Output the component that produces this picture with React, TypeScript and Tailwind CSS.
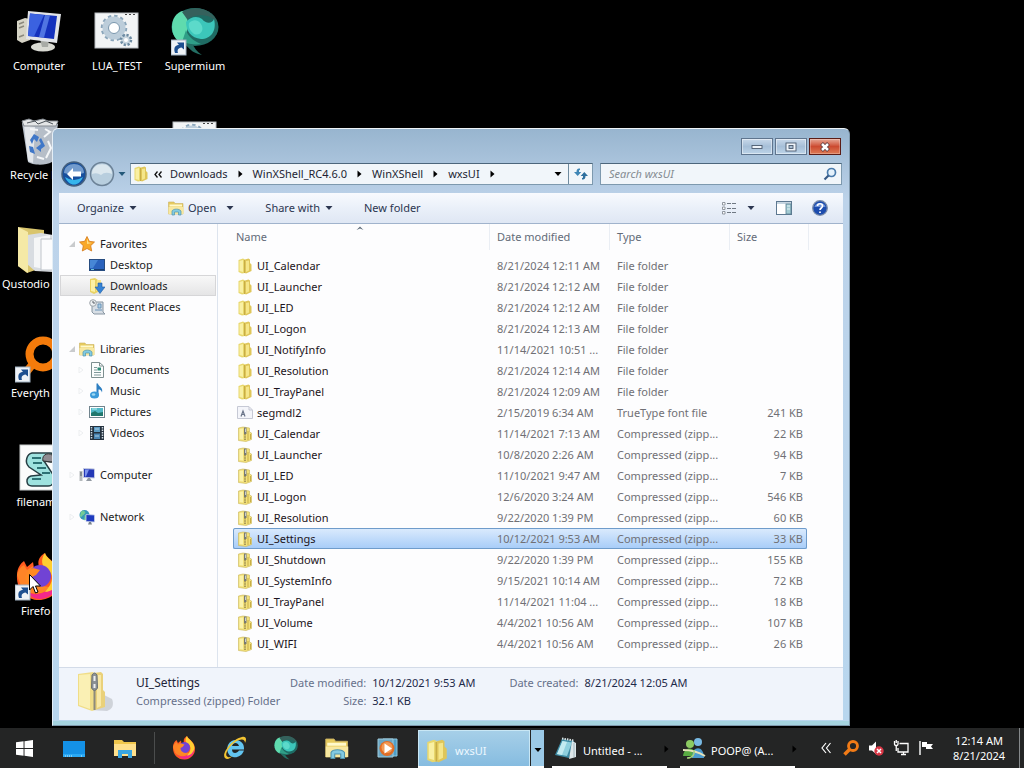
import React, { useState } from 'react';

type IconProps = { className?: string };

const ShortcutBadge = () => (
  <g>
    <rect x="0" y="32" width="15" height="15" fill="#eef2f6" stroke="#9fb0c0" />
    <path d="M4 45 C2 39 5 37 8 37 L6 34.500 H13 V41.500 L10.500 39.500 C7 40 6 42 7 45 Z" fill="#1d4f8f" />
  </g>
);

const ComputerBig = () => (
  <svg viewBox="0 0 48 48" className="size-12">
    <path d="M2 13 L10 10 L15 11 V32 L7 35 L2 32 Z" fill="#d6d4c6" />
    <path d="M4 16 L9 14 M4 20 L9 18 M4 29 L9 27" stroke="#8a887c" strokeWidth="1.500" />
    <ellipse cx="28" cy="39" rx="12" ry="4.500" fill="#d9dad3" />
    <path d="M25 31 H34 L33 39 H27 Z" fill="#a8aba6" />
    <path d="M13 3 L46 6 L42 35 L11 31 Z" fill="#e2e4e8" />
    <path d="M15 5.500 L42 8 L39 31 L13 28 Z" fill="#1431bd" />
    <path d="M15 5.500 L29 7 L19 28.500 L13 28 Z" fill="#3b62e0" />
    <path d="M30 7 L35 7.500 L29 29.500 L24 29 Z" fill="#6a93f2" opacity=".7" />
  </svg>
);

const GearFile = () => (
  <svg viewBox="0 0 48 48" className="size-12">
    <rect x="2" y="5" width="43" height="35" fill="#f2f4f5" stroke="#b8bcc0" />
    <path d="M32 6.500 H43" stroke="#444" strokeDasharray="2 2" />
    <circle cx="21" cy="20" r="11.500" fill="none" stroke="#8aa5ba" strokeWidth="3.500" strokeDasharray="3.200 2.800" />
    <circle cx="21" cy="20" r="8.500" fill="none" stroke="#bccdda" strokeWidth="6" />
    <circle cx="21" cy="20" r="5.500" fill="#fff" stroke="#7996ad" />
    <circle cx="33" cy="32" r="5" fill="#c9d6df" stroke="#6d8ba2" strokeWidth="2.500" strokeDasharray="2.200 1.700" />
    <circle cx="33" cy="32" r="2" fill="#fff" />
  </svg>
);

const SupermiumArt = () => (
  <g>
    <ellipse cx="24" cy="19" rx="23.500" ry="19" fill="#1f6b63" />
    <path d="M1 19 C1 10 6 4 12 3 C19 10 18 24 11 35 C4 32 1 26 1 19" fill="#5fdbae" />
    <path d="M11 4 C24 -4 42 1 46 14 C38 5 24 6 16 11 Z" fill="#35615c" />
    <path d="M15 14 C20 8 27 8 31 11 C35 16 41 16 43 11 C46 23 40 31 30 31 C20 30 15 23 15 14" fill="#3cc6ba" />
    <path d="M18 15 C23 10 29 12 31 18 C33 24 28 28 23 26 C19 23 17 19 18 15" fill="#69e2d2" opacity=".7" />
    <path d="M11 34 C18 36 24 37 30 36 C21 32 17 28 15 22 Z" fill="#2f9e87" />
    <path d="M12 35 C18 39 20 45 31 47 C25 43 24 40 22 37 Z" fill="#236e63" />
  </g>
);

const SupermiumBig = () => (
  <svg viewBox="0 0 48 48" className="size-12">
    <SupermiumArt />
    <ShortcutBadge />
  </svg>
);

const RecycleBin = () => (
  <svg viewBox="0 0 48 48" className="size-12">
    <path d="M7 6 L43 7 L37 45 C30 49 17 48 13 45 Z" fill="#b6bec8" />
    <path d="M9 8 L20 10 L18 46 L13 44 Z" fill="#e3e7eb" />
    <path d="M7 4 L14 2 L19 4 L28 2 L33 4 L43 4 L41 9 L9 9 Z" fill="#e4e6e7" stroke="#858b91" />
    <path d="M12 6 L20 4 L23 7 L31 4 L38 7" stroke="#4d545a" fill="none" />
    <path d="M15 23 L19 17 L24 20 L22 25 L19 22 L17 27 Z M26 21 L30 29 L26 32 L26 35 L21 31 L26 27 L24 23 Z M14 29 L18 30 L20 37 L15 35 Z" fill="#3f77c8" />
    <path d="M30 12 L35 15 L29 20 M33 24 L36 31 L31 41 M15 12 L23 13 M22 40 L29 42" stroke="#f4f6f8" strokeWidth="2" fill="none" />
  </svg>
);

const QustodioFolder = () => (
  <svg viewBox="0 0 48 48" className="size-12">
    <path d="M3 1 L29 4 V41 L12 47 L3 40 Z" fill="#d9c56d" />
    <path d="M12 9 L26 7 L38 9 V46 L20 45 L12 38 Z" fill="#d8dce1" />
    <path d="M19 12 L35 9 V44 L19 41 Z" fill="#f5f6f7" />
    <path d="M26 13 H46 V44 H26 Z" fill="#fcfcfd" stroke="#bfc4ca" />
    <path d="M3 1 L13 6 V47 L3 40 Z" fill="#f5e9a6" />
  </svg>
);

const EverythingBig = () => (
  <svg viewBox="0 0 48 48" className="size-12">
    <circle cx="28" cy="19" r="13.500" fill="none" stroke="#f47b0b" strokeWidth="8" />
    <path d="M17 30 L9 40" stroke="#f47b0b" strokeWidth="8" strokeLinecap="round" />
    <ShortcutBadge />
  </svg>
);

const ScriptFile = () => (
  <svg viewBox="0 0 48 48" className="size-12">
    <rect x="5" y="1" width="42" height="45" fill="#fbfcfc" stroke="#c7cbcc" />
    <path d="M17 9 H35 C41 9 41 18 36 18 L29 17 L39 32 C41 37 38 42 33 42 H17 C11 42 10 34 16 32 L26 31 L14 23 C9 18 12 10 17 9 Z" fill="#9ee2df" stroke="#263e44" strokeWidth="1.500" />
    <path d="M17 14 H26 M18 19 H27 M22 24 H31 M27 29 H35 M17 35 H26" stroke="#2d7275" strokeWidth="2" />
    <path d="M28 17 C26 10 35 7 39 13 L37 18 Z" fill="#8f8b91" stroke="#333" />
  </svg>
);

const FirefoxArt = () => (
  <g>
    <path d="M2 22 C2 15 6 10 9 8 L12 14 L18 9 L19 15 L25 16 C21 8 25 3 30 0 C31 5 40 8 44 17 C50 31 42 45 26 47 C11 48 1 36 2 22" fill="#ff5a1f" />
    <path d="M2 22 C3 18 5 14 9 12 L12 17 L18 13 C18 25 23 34 35 34 C29 43 13 43 6 33 Z" fill="#ff8427" />
    <path d="M9 36 C16 44 30 43 38 31 C41 24 39 17 34 14 C42 16 47 25 43 34 C38 44 26 49 17 44 Z" fill="#f5288b" />
    <path d="M30 0 C31 6 44 10 45 24 C43 34 36 39 30 39 C39 29 39 21 32 16 C27 14 25 7 30 0" fill="#ffcf32" />
    <circle cx="25" cy="23" r="11" fill="#7143d4" />
    <path d="M13 18 L18 15 L25 17 L21 22 L17 24 C17 32 25 35 32 34 C22 42 11 34 10 24 Z" fill="#ff8a23" />
  </g>
);

const FirefoxBig = () => (
  <svg viewBox="0 0 48 48" className="size-12">
    <FirefoxArt />
    <ShortcutBadge />
  </svg>
);

const Blank = () => <span className="block size-12" />;

const desktopItems: { label: string; Icon: () => React.ReactElement; labelClass?: string }[] = [
  { label: 'Computer', Icon: ComputerBig },
  { label: 'Recycle Bin', Icon: RecycleBin },
  { label: 'Qustodio', Icon: QustodioFolder, labelClass: 'self-start pl-[2px]' },
  { label: 'Everyth', Icon: EverythingBig, labelClass: 'self-start pl-[11px]' },
  { label: 'filename', Icon: ScriptFile },
  { label: 'Firefo', Icon: FirefoxBig, labelClass: 'self-start pl-[21px]' },
  { label: 'LUA_TEST', Icon: GearFile },
  { label: '', Icon: Blank },
  { label: '', Icon: Blank },
  { label: '', Icon: Blank },
  { label: '', Icon: Blank },
  { label: '', Icon: Blank },
  { label: 'Supermium', Icon: SupermiumBig },
  { label: '', Icon: GearFile },
];

const Folder = ({ className = 'size-4' }: IconProps) => (
  <svg viewBox="0 0 16 16" className={className}>
    <path d="M1.500 2 L6 .5 L8 1.500 V15 L5 15.500 L1.500 14 Z" fill="#e8d76c" />
    <path d="M2.500 3 L6 2 V14 L2.500 13 Z" fill="#f9f0a3" />
    <path d="M8 1.500 L11.500 .5 L13 1.500 V5 L14.500 6.500 V13 L9 15.500 L8 15 Z" fill="#dfc659" />
    <path d="M9 3 L12 2.500 V12.500 L9 14 Z" fill="#f5e68a" />
    <path d="M7.500 2 V15" stroke="#c7ad45" />
  </svg>
);

const ZipFolder = ({ className = 'size-4' }: IconProps) => (
  <svg viewBox="0 0 16 16" className={className}>
    <path d="M1.500 2 L6 1 L12.500 2 V6 L14.500 7 V13.500 L9 15.500 L1.500 14.500 Z" fill="#f3e17a" stroke="#c9b558" strokeWidth=".6" />
    <path d="M2.500 3 L6 2.500 V13.500 L2.500 13 Z" fill="#fbf3ab" />
    <path d="M8 8 V15" stroke="#8c7f49" strokeWidth="1.400" strokeDasharray="1.500 .8" />
    <path d="M7 1.500 H9.500 V8 H7 Z" fill="#777a74" />
    <path d="M8.500 2.500 V6" stroke="#e1e3e0" strokeWidth=".8" />
    <path d="M11 5 V14 M13.500 8 V13" stroke="#c9ae45" />
  </svg>
);

const ZipBig = () => (
  <svg viewBox="0 0 40 42" className="h-[42px] w-10">
    <path d="M14 39 L31 40 C37 38 38 33 36 28 L28 24 Z" fill="#b9bcc3" opacity=".6" />
    <path d="M2 3 L17 1 L19 3 V39 L16 40 L2 35 Z" fill="#f0dd88" />
    <path d="M3 4 L14 3 V38 L3 34 Z" fill="#faf0b4" />
    <path d="M18 2 L25 1 L27 3 V19 L29 21 V36 L19 39 Z" fill="#ead17a" />
    <path d="M21 4 L25 4 V35 L21 37 Z" fill="#f8e8a6" />
    <path d="M18.500 18 V39" stroke="#8d8a7c" strokeWidth="2" />
    <path d="M16 4 Q18.500 0 21 4 L21.500 17 Q18.500 22 15.500 17 Z" fill="#8c9194" stroke="#6a7074" />
    <path d="M18.500 5 V10 M18.500 13 V17" stroke="#eceeef" strokeWidth="2" />
  </svg>
);

const FontFile = () => (
  <svg viewBox="0 0 16 16" className="size-4">
    <path d="M.5 1.500 H12 L15.500 5 V13.500 H.5 Z" fill="#f4f5fa" stroke="#c6c9d5" />
    <path d="M4 11.500 L6 6 L8 11.500 M5 9.500 H7.500" stroke="#6a7489" strokeWidth="1.200" fill="none" />
    <path d="M12 2 V5 H15" stroke="#c4c7d3" fill="none" />
  </svg>
);

const Star = () => (
  <svg viewBox="0 0 16 16" className="size-4">
    <path d="M8 .5 L10.300 5.300 L15.500 6 L11.700 9.700 L12.700 15 L8 12.500 L3.300 15 L4.300 9.700 L.5 6 L5.700 5.300 Z" fill="#f9a92a" stroke="#d3791b" strokeWidth=".8" />
    <path d="M8 2.500 L9.500 6.500 L13 7 L8 8 Z" fill="#ffe08a" />
  </svg>
);

const Monitor = () => (
  <svg viewBox="0 0 16 16" className="size-4">
    <rect x=".5" y="2.500" width="15" height="11" fill="#2a62bd" stroke="#274c80" />
    <path d="M1 3 H9 L4 11 H1 Z" fill="#4787d6" />
    <path d="M1 12.500 H15" stroke="#173f75" />
    <path d="M2 12.500 H5" stroke="#6fc6dc" />
  </svg>
);

const DownloadsIcon = () => (
  <svg viewBox="0 0 16 16" className="size-4">
    <path d="M1 1 L6 0 L9 2 V14 L5 16 L1 14 Z" fill="#e9d264" />
    <path d="M2 2 L6 2 V14 L2 13 Z" fill="#fbf1a4" />
    <path d="M8 2 L12 2 V13 H7 Z" fill="#f6e58b" />
    <path d="M9 5 H13 V9 H16 L11 15.500 L6 9 H9 Z" fill="#3683d5" stroke="#1f5da3" strokeWidth=".6" />
  </svg>
);

const RecentIcon = () => (
  <svg viewBox="0 0 16 16" className="size-4">
    <path d="M3 3 H14 V13 L16 15 H5 L3 13 Z" fill="#d7dee5" stroke="#8795a1" />
    <circle cx="4" cy="4" r="3.300" fill="#eef1f3" stroke="#9ea5aa" />
    <path d="M4 2 V4 H6" stroke="#586069" fill="none" />
    <path d="M9 5 H12 V9 H9 Z M6 11 H13" stroke="#6a93b7" fill="#a9cee6" />
  </svg>
);

const Libraries = ({ className = 'size-4' }: IconProps) => (
  <svg viewBox="0 0 16 16" className={className}>
    <path d="M.5 2 H6 L7 3.500 H15 V14 H.5 Z" fill="#e7cb5e" stroke="#c9b163" strokeWidth=".6" />
    <path d="M1.500 4.500 H14 V6.500 H1.500 Z" fill="#fff9cb" />
    <path d="M.5 7 H15.500 V14 H.5 Z" fill="#f8e8a0" />
    <path d="M4 15 V11 C5 8.500 11.500 8.500 13 11 V15 H10.500 V12 H6.500 V15 Z" fill="#83cbe2" stroke="#4f94ae" strokeWidth=".7" />
  </svg>
);

const DocIcon = () => (
  <svg viewBox="0 0 16 16" className="size-4">
    <path d="M2.500 .5 H10.500 L14.500 4 V15.500 H2.500 Z" fill="#fcfdfd" stroke="#7d8f90" />
    <path d="M10.500 .5 V4 H14" fill="none" stroke="#7d8f90" />
    <path d="M5 5.500 H8 M5 8 H8 M5 10.500 H12 M5 13 H12" stroke="#7f989a" />
    <path d="M8.500 5.500 H12 V8.500 H8.500 Z" fill="#2d8c77" />
  </svg>
);

const MusicIcon = () => (
  <svg viewBox="0 0 16 16" className="size-4">
    <path d="M7.500 .5 H9 C9.500 4 14.500 4 13 9.500 C12.500 7 10.500 6.500 9.500 6.500 V13 H7.500 Z" fill="#2d7fc2" />
    <ellipse cx="5.500" cy="12" rx="4.500" ry="3.500" fill="#3b9ad9" />
    <ellipse cx="4.500" cy="11.500" rx="1.800" ry="1.200" fill="#9fd9f3" />
  </svg>
);

const PictureIcon = () => (
  <svg viewBox="0 0 16 16" className="size-4">
    <rect x=".5" y="2.500" width="15" height="11" fill="#fff" stroke="#71848e" />
    <rect x="2" y="4" width="12" height="8" fill="#51b8c7" />
    <path d="M2 9 L6 7 L9 9 L14 8 V12 H2 Z" fill="#20776d" />
    <path d="M3 5 H8" stroke="#b9eff2" />
  </svg>
);

const VideoIcon = () => (
  <svg viewBox="0 0 16 16" className="size-4">
    <rect x="1" y="1" width="14" height="14" fill="#24313e" />
    <path d="M2.500 2 V14 M13.500 2 V14" stroke="#cfdbe3" strokeWidth="1.500" strokeDasharray="1.500 1" />
    <path d="M5 2 H11 V7 H5 Z" fill="#5c9bc4" />
    <path d="M5 8.500 H11 V14 H5 Z" fill="#4b86b4" />
    <path d="M6 4 H10 M6 11 H10" stroke="#aacce0" />
  </svg>
);

const ComputerSmall = () => (
  <svg viewBox="0 0 16 16" className="size-4">
    <path d="M.5 4 H3.500 V14 H.5 Z" fill="#b4b9bc" />
    <path d="M1 6 H3 M1 8 H3" stroke="#596267" />
    <path d="M4.500 1.500 L15.500 2 V11 L4.500 10.500 Z" fill="#2438b5" stroke="#c5cbe2" />
    <path d="M6 2.500 L10 2.500 L7 9.500 H6 Z" fill="#7c93ed" />
    <path d="M9 11 H11 L13 14 H7 Z" fill="#9299a2" />
  </svg>
);

const NetworkIcon = () => (
  <svg viewBox="0 0 16 16" className="size-4">
    <circle cx="5.500" cy="6" r="5" fill="#3698b9" />
    <path d="M2 3 C5 1 7 3 5 5 C2 6 4 8 1 7 M6 6 L8 9 L5 11" fill="#73ce94" stroke="#77cc99" />
    <path d="M7 5.500 L15.500 6 V13 L7 12.500 Z" fill="#1e3abf" stroke="#c6d0e8" strokeWidth=".8" />
    <path d="M10 13 H12 L13 15.500 H9 Z" fill="#7a838c" />
  </svg>
);

type NavItem = { label: string; Icon: (p: IconProps) => React.ReactElement };
const navGroups: { head: NavItem; open?: boolean; arrows?: boolean; items: NavItem[] }[] = [
  {
    head: { label: 'Favorites', Icon: Star },
    open: true,
    items: [
      { label: 'Desktop', Icon: Monitor },
      { label: 'Downloads', Icon: DownloadsIcon },
      { label: 'Recent Places', Icon: RecentIcon },
    ],
  },
  {
    head: { label: 'Libraries', Icon: Libraries },
    open: true,
    arrows: true,
    items: [
      { label: 'Documents', Icon: DocIcon },
      { label: 'Music', Icon: MusicIcon },
      { label: 'Pictures', Icon: PictureIcon },
      { label: 'Videos', Icon: VideoIcon },
    ],
  },
  { head: { label: 'Computer', Icon: ComputerSmall }, items: [] },
  { head: { label: 'Network', Icon: NetworkIcon }, items: [] },
];

const zip = 'Compressed (zipp...';
const files: [string, string, string, string][] = [
  ['UI_Calendar', '8/21/2024 12:11 AM', 'File folder', ''],
  ['UI_Launcher', '8/21/2024 12:12 AM', 'File folder', ''],
  ['UI_LED', '8/21/2024 12:12 AM', 'File folder', ''],
  ['UI_Logon', '8/21/2024 12:13 AM', 'File folder', ''],
  ['UI_NotifyInfo', '11/14/2021 10:51 ...', 'File folder', ''],
  ['UI_Resolution', '8/21/2024 12:14 AM', 'File folder', ''],
  ['UI_TrayPanel', '8/21/2024 12:09 AM', 'File folder', ''],
  ['segmdl2', '2/15/2019 6:34 AM', 'TrueType font file', '241 KB'],
  ['UI_Calendar', '11/14/2021 7:13 AM', zip, '22 KB'],
  ['UI_Launcher', '10/8/2020 2:26 AM', zip, '94 KB'],
  ['UI_LED', '11/10/2021 9:47 AM', zip, '7 KB'],
  ['UI_Logon', '12/6/2020 3:24 AM', zip, '546 KB'],
  ['UI_Resolution', '9/22/2020 1:39 PM', zip, '60 KB'],
  ['UI_Settings', '10/12/2021 9:53 AM', zip, '33 KB'],
  ['UI_Shutdown', '9/22/2020 1:39 PM', zip, '155 KB'],
  ['UI_SystemInfo', '9/15/2021 10:14 AM', zip, '72 KB'],
  ['UI_TrayPanel', '11/14/2021 11:04 ...', zip, '18 KB'],
  ['UI_Volume', '4/4/2021 10:56 AM', zip, '107 KB'],
  ['UI_WIFI', '4/4/2021 10:56 AM', zip, '26 KB'],
];

const Down = ({ className = '' }: IconProps) => (
  <svg viewBox="0 0 8 5" className={`h-[5px] w-2 shrink-0 ${className}`}>
    <path d="M.5 0 H7.500 L4 4 Z" fill="currentColor" />
  </svg>
);

const Right = ({ className = '' }: IconProps) => (
  <svg viewBox="0 0 5 8" className={`h-2 w-[5px] shrink-0 ${className}`}>
    <path d="M.5 .5 V7.500 L4.500 4 Z" fill="currentColor" />
  </svg>
);

const TreeArrow = ({ open }: { open?: boolean }) => (
  <svg viewBox="0 0 6 6" className="size-[6px] shrink-0">
    {open ? <path d="M6 0 V6 H0 Z" fill="#c9cbcd" /> : <path d="M1 0 L5 3 L1 6 Z" fill="none" stroke="#eceef0" />}
  </svg>
);

function TitleBar() {
  const glass = 'flex h-[17px] w-8 items-center justify-center border border-[#5f758e] bg-linear-to-b from-[#c8d9ea] via-[#a6bfd8] via-50% to-[#bdd4e8] shadow-[inset_0_0_0_1px_rgba(255,255,255,0.45)]';
  return (
    <div className="flex h-[27px] items-end justify-end gap-[2px] pr-[2px] pb-px">
      <button aria-label="Minimize" className={glass}>
        <svg viewBox="0 0 12 6" className="h-[6px] w-3"><rect x="1" y="1.500" width="10" height="3" fill="#eef4fa" stroke="#4a5a6e" strokeWidth=".9" /></svg>
      </button>
      <button aria-label="Maximize" className={glass}>
        <svg viewBox="0 0 12 10" className="h-[10px] w-3"><rect x="1" y="1" width="10" height="8" fill="#eef4fa" stroke="#4a5a6e" strokeWidth=".9" /><rect x="4" y="3.500" width="4" height="3" fill="#a9bfd4" stroke="#4a5a6e" strokeWidth=".9" /></svg>
      </button>
      <button aria-label="Close" className="flex h-[17px] w-8 items-center justify-center border border-[#5a1c16] bg-linear-to-b from-[#e5a796] via-[#cc4a30] via-50% to-[#dc7a55] shadow-[inset_0_0_0_1px_rgba(255,255,255,0.25)]">
        <svg viewBox="0 0 12 10" className="h-[10px] w-3"><path d="M2.500 1.500 L9.500 8.500 M9.500 1.500 L2.500 8.500" stroke="#5a3a40" strokeWidth="4" /><path d="M3 2 L9 8 M9 2 L3 8" stroke="#fff" strokeWidth="2.500" /></svg>
      </button>
    </div>
  );
}

function NavigationBar() {
  const crumbs = ['Downloads', 'WinXShell_RC4.6.0', 'WinXShell', 'wxsUI'];
  return (
    <div className="flex h-[37px] items-center pr-px pb-px pl-[2px]">
      <button aria-label="Back">
        <svg viewBox="0 0 26 26" className="size-[26px]">
          <circle cx="13" cy="13" r="12" fill="#174f9d" stroke="#46617e" strokeWidth="1.500" />
          <path d="M3 12 C3 0 23 0 23 12 Q13 15 3 12" fill="#729bcd" />
          <path d="M4 16 C8 26 18 26 22 16 Q13 22 4 16" fill="#35b5ec" />
          <path d="M6 13 L12 7 V10.500 H20 V15.500 H12 V19 Z" fill="#fff" />
        </svg>
      </button>
      <button aria-label="Forward" className="ml-[2px]">
        <svg viewBox="0 0 26 26" className="size-[26px]">
          <circle cx="13" cy="13" r="11.500" fill="#b8cede" stroke="#6c8297" strokeWidth="1.500" />
          <path d="M3 13 C3 0 23 0 23 13 Q16 10 12 14 Q8 11 3 13" fill="#dbe7ee" />
        </svg>
      </button>
      <button aria-label="Recent pages" className="ml-[3px] w-2 text-[#245879]"><Down /></button>
      <div className="ml-1 flex h-[22px] flex-1 items-center border border-[#7d99ae] border-t-[#4c667b] bg-[#f1f6fa]">
        <Folder className="ml-[2px] size-4" />
        <button aria-label="Parent folders" className="mr-[8px] ml-[5px]">
          <svg viewBox="0 0 8 7" className="h-[7px] w-2"><path d="M3.500 .5 L1 3.500 L3.500 6.500 M7.500 .5 L5 3.500 L7.500 6.500" fill="none" stroke="#111" strokeWidth="1.300" /></svg>
        </button>
        {crumbs.map((c) => (
          <React.Fragment key={c}>
            <button className="text-[#231f33]">{c}</button>
            <Right className="mx-[10px]" />
          </React.Fragment>
        ))}
        <button aria-label="Address history" className="mr-[6px] ml-auto"><Down /></button>
        <button aria-label="Refresh" className="flex h-full w-6 items-center justify-center border-l border-[#6f8b9f]">
          <svg viewBox="0 0 16 14" className="h-[14px] w-4">
            <path d="M7 1.500 C4.500 1 3.500 2.500 3.500 5 H1 L4.700 9 L8.300 5 H6 C6 3.500 6 3 7 3 Z" fill="#3f86b5" />
            <path d="M9 12.500 C11.500 13 12.500 11.500 12.500 9 H15 L11.300 5 L7.700 9 H10 C10 10.500 10 11 9 11 Z" fill="#2d6f9e" />
          </svg>
        </button>
      </div>
      <label className="ml-[7px] flex h-[22px] w-[242px] items-center border border-[#7d99ae] border-t-[#4c667b] bg-[#f1f6fa] pr-1 pl-2">
        <input aria-label="Search wxsUI" placeholder="Search wxsUI" className="min-w-0 flex-1 bg-transparent text-[11px] italic outline-none placeholder:text-[#848b91]" />
        <svg viewBox="0 0 14 14" className="size-[14px]"><circle cx="8.500" cy="5.500" r="4" fill="#e4f1fb" stroke="#4a7bab" strokeWidth="1.700" /><path d="M5.500 8.500 L1.500 12.500" stroke="#365a85" strokeWidth="2.200" /></svg>
      </label>
    </div>
  );
}

function Toolbar() {
  return (
    <div className="flex h-[31px] items-center border-b border-[#a0b3cc] bg-linear-to-b from-[#f8fafe] via-[#eaf0f9] via-50% to-[#dfe7f4] pr-[15px] pl-[18px] text-[#2c3650]">
      <button className="flex items-center gap-[5px]">Organize <Down /></button>
      <button className="ml-[31px] flex items-center gap-1"><Libraries />Open</button>
      <button aria-label="Open with" className="ml-[10px]"><Down /></button>
      <button className="ml-[31px] flex items-center gap-[5px]">Share with <Down /></button>
      <button className="ml-[31px]">New folder</button>
      <button aria-label="Change view" className="ml-auto">
        <svg viewBox="0 0 16 14" className="h-[14px] w-4"><path d="M1.500 1.500 H4 V4 H1.500 Z M1.500 6 H4 V8.500 H1.500 Z M1.500 10.500 H4 V13 H1.500 Z" fill="#fff" stroke="#7a828c" strokeWidth=".8" /><path d="M6 2.500 H10 M11 2.500 H15 M6 7.500 H10 M11 7.500 H15 M6 11.500 H10 M11 11.500 H15" stroke="#6f7883" /></svg>
      </button>
      <button aria-label="More views" className="ml-[10px]"><Down /></button>
      <button aria-label="Preview pane" className="ml-[21px]">
        <svg viewBox="0 0 16 14" className="h-[14px] w-4"><rect x=".5" y=".5" width="15" height="13" fill="#fff" stroke="#5d7890" /><path d="M1 2 H15" stroke="#8eacc3" /><rect x="10" y="3" width="5" height="10" fill="#a3cbd3" stroke="#5a8194" strokeWidth=".8" /><path d="M11 5 H14 M11 8 H14" stroke="#e2f4f6" /></svg>
      </button>
      <button aria-label="Help" className="ml-5">
        <svg viewBox="0 0 16 16" className="size-4"><circle cx="8" cy="8" r="7.300" fill="#1c4cae" stroke="#7b8daa" strokeWidth="1.300" /><path d="M2.500 7 C3 1.500 13 1.500 13.500 7 Z" fill="#6f93d8" /><path d="M5.500 6 C5.500 3 10.500 3 10.500 6 C10.500 8 8 8 8 10 M8 11.500 V13" stroke="#fff" strokeWidth="1.700" fill="none" /></svg>
      </button>
    </div>
  );
}

function Sidebar() {
  return (
    <nav aria-label="Folders" className="flex w-[159px] shrink-0 flex-col gap-[21px] border-r border-[#dde4ee] px-px pt-[9px] text-[#1b1b22]">
      {navGroups.map((g) => (
        <div key={g.head.label}>
          <a href="#" className="flex h-[21px] items-center pl-[9px]">
            <TreeArrow open={g.open} />
            <span className="mr-[5px] ml-1"><g.head.Icon /></span>
            {g.head.label}
          </a>
          {g.items.map(({ label, Icon }) => (
            <a
              key={label}
              href="#"
              className={`flex h-[21px] items-center gap-[5px] border ${label === 'Downloads' ? 'border-[#d6d6d8] bg-linear-to-b from-[#f8f8f8] to-[#e5e5e6]' : 'border-transparent'} ${g.arrows ? 'pl-[17px]' : 'pl-7'}`}
            >
              {g.arrows && <TreeArrow />}
              <Icon />
              {label}
            </a>
          ))}
        </div>
      ))}
    </nav>
  );
}

function FileList() {
  const [selected, setSelected] = useState(13);
  const head = 'block h-[26px] border-l border-[#eaeef4] pl-[7px] text-left leading-[26px] font-normal text-[#636b78]';
  return (
    <div className="min-w-0 flex-1 pb-[13px] pl-[15px]">
      <table className="w-[574px] table-fixed border-separate border-spacing-0">
        <colgroup>
          <col className="w-64" />
          <col className="w-30" />
          <col className="w-30" />
          <col className="w-[78px]" />
        </colgroup>
        <thead>
          <tr className="h-[31px] align-top">
            <th className="p-0">
              <span className="relative block pl-[3px] text-left leading-[26px] font-normal text-[#636b78]">
                Name
                <svg viewBox="0 0 8 4" className="absolute top-[2px] left-[123px] h-1 w-2"><path d="M.5 4 L4 .5 L7.500 4 L4 2.500 Z" fill="#5e6b78" /></svg>
              </span>
            </th>
            <th className="p-0"><span className={head}>Date modified</span></th>
            <th className="p-0"><span className={head}>Type</span></th>
            <th className="p-0"><span className={`${head} -mr-[2px] border-r`}>Size</span></th>
          </tr>
        </thead>
        <tbody className="text-[#707075]">
          {files.map(([name, date, type, size], i) => (
            <tr
              key={i}
              onClick={() => setSelected(i)}
              className={`h-[21px] ${i === selected ? 'rounded-xs bg-linear-to-b from-[#dcebfd] to-[#a6ccf8] outline outline-1 -outline-offset-1 outline-[#6f9ccb]' : ''}`}
            >
              <td className="p-0">
                <span className="flex items-center gap-1 pl-1 text-[#1c1420]">
                  {i < 7 ? <Folder /> : i === 7 ? <FontFile /> : <ZipFolder />}
                  {name}
                </span>
              </td>
              <td className="overflow-hidden p-0 pl-2 whitespace-nowrap">{date}</td>
              <td className="overflow-hidden p-0 pl-2 whitespace-nowrap">{type}</td>
              <td className="p-0 pr-1 text-right">{size}</td>
            </tr>
          ))}
        </tbody>
      </table>
    </div>
  );
}

function DetailsPane() {
  return (
    <div className="flex h-[53px] border-t border-[#d3dbe8] bg-[#f0f4fb] pt-[3px] pl-[17px] leading-[18px] text-[#66708a]">
      <ZipBig />
      <div className="ml-5 w-[154px] pt-[3px]">
        <p className="text-xs leading-[18px] text-[#1e2438]">UI_Settings</p>
        <p className="whitespace-nowrap">Compressed (zipped) Folder</p>
      </div>
      <dl className="grid auto-rows-[18px] grid-cols-[auto_auto] content-start gap-x-[6px] pt-[3px]">
        <dt className="text-right">Date modified:</dt>
        <dd className="text-[#1e2a4a]">10/12/2021 9:53 AM</dd>
        <dt className="text-right">Size:</dt>
        <dd className="text-[#1e2a4a]">32.1 KB</dd>
      </dl>
      <dl className="ml-[34px] flex gap-[6px] pt-[3px]">
        <dt>Date created:</dt>
        <dd className="text-[#1e2a4a]">8/21/2024 12:05 AM</dd>
      </dl>
    </div>
  );
}

function ExplorerWindow() {
  return (
    <section aria-label="wxsUI" className="absolute top-32 left-[52px] w-[798px] rounded-t-md border border-[#7f98ac] border-t-[#eef4f8] border-l-[#e4eef6] bg-linear-to-b from-[#98b5cf] via-[#bdd3ea] via-12% to-[#b8d6ee] px-[6px] pb-[5px] shadow-[inset_0_-4px_0_#a5d3df]">
      <TitleBar />
      <NavigationBar />
      <div className="bg-[#fdfdfe]">
        <Toolbar />
        <div className="flex">
          <Sidebar />
          <FileList />
        </div>
        <DetailsPane />
      </div>
    </section>
  );
}

const IeIcon = () => (
  <svg viewBox="0 0 24 24" className="size-6">
    <path d="M21 14.500 C19 20 14 22 10 21 C5 20 3 14 5 9 C8 3 16 2 20 8 C21 10 21 12 21 13.500 H9 C9 18 14 18 16 14.500 Z M9 10 H16 C15 6 10 6 9 10" fill="#63c5f0" fillRule="evenodd" />
    <path d="M2 22 C-2 18 9 3 19 1 C23 0 24 3 22 7 C22 3 18 2 11 7 C4 13 1 20 5 21 C7 22 9 20 10 19 C7 23 4 24 2 22" fill="#f3c431" />
  </svg>
);

const WmpIcon = () => (
  <svg viewBox="0 0 24 24" className="size-6">
    <path d="M7 3 H21 V20 H7 Z" fill="#4f9fc8" stroke="#8cc6dd" />
    <path d="M2 3 H17 V21 H2 Z" fill="#6ba6c4" stroke="#9ecbdc" />
    <circle cx="11" cy="12.500" r="7.500" fill="#e06d26" />
    <circle cx="11" cy="11.500" r="5.500" fill="#f39a55" />
    <path d="M8.500 7.500 L16 12.500 L8.500 17.500 Z" fill="#fff" />
  </svg>
);

const ExplorerIcon = () => (
  <svg viewBox="0 0 24 24" className="size-6">
    <path d="M1 4 H9 L11 6 H23 V20 H1 Z" fill="#f0c64c" />
    <path d="M1 8 H23 V20 H1 Z" fill="#ffe08c" />
    <path d="M5 22 V14 H19 V22 H15 V18 H9 V22 Z" fill="#3aa6e1" />
  </svg>
);

const DesktopTask = () => (
  <svg viewBox="0 0 24 24" className="size-6">
    <rect x="1" y="5" width="22" height="16" fill="#1491e6" />
    <path d="M1 18 H23 V21 H1 Z" fill="#2aa9f5" />
    <path d="M3 20 H11 M19 20 H21" stroke="#c8efff" strokeDasharray="1 1" />
  </svg>
);

const NotepadIcon = () => (
  <svg viewBox="0 0 24 24" className="size-6">
    <path d="M8 2 L20 4 L15 21 L1 18 Z" fill="#3d8aa3" />
    <path d="M8.500 4 L18 5.500 L13 19 L3 17 Z" fill="#8fd0de" />
    <path d="M8.500 4 L13 5 L8 18 L3 17 Z" fill="#c3ebf1" />
    <path d="M18 4 L22 6 V20 L15 22 Z" fill="#dde7ea" />
    <path d="M20 6 V20" stroke="#a2b8bf" />
    <path d="M8 1.500 L20 3.500" stroke="#dce8ea" strokeWidth="2" strokeDasharray="1.500 1" />
  </svg>
);

const MessengerIcon = () => (
  <svg viewBox="0 0 24 24" className="size-6">
    <circle cx="8" cy="7" r="4" fill="#8ccb62" />
    <path d="M1 19 C2 9 13 9 14 19 Z" fill="#58ab43" />
    <circle cx="16" cy="5" r="4" fill="#78b9e3" />
    <path d="M10 21 C10 8 22 8 22 21 Z" fill="#4b9bcf" />
    <path d="M1 13 C8 13 15 14 23 19" stroke="#e6e3ba" strokeWidth="2" fill="none" />
    <path d="M5 21 C11 21 13 17 12 13" stroke="#a5d37c" strokeWidth="1.500" fill="none" />
  </svg>
);

function Taskbar() {
  const quick = 'flex w-[51px] items-center justify-center';
  return (
    <footer className="flex h-10 shrink-0 bg-[#242525] text-white">
      <button aria-label="Start" className="flex w-12 items-center justify-center">
        <svg viewBox="0 0 18 18" className="size-[17px]"><path d="M0 2.500 L8 1.300 V8.500 H0 Z M9 1.200 L18 0 V8.500 H9 Z M0 9.500 H8 V16.700 L0 15.500 Z M9 9.500 H18 V18 L9 16.800 Z" fill="#fff" /></svg>
      </button>
      <button aria-label="Show desktop" className={quick}><DesktopTask /></button>
      <button aria-label="File Explorer" className={quick}><ExplorerIcon /></button>
      <span className="my-1 ml-1 w-px bg-[#4b4d4d]" />
      <button aria-label="Firefox" className="ml-[3px] flex w-[51px] items-center justify-center"><svg viewBox="0 0 48 48" className="size-6"><FirefoxArt /></svg></button>
      <button aria-label="Internet Explorer" className={quick}><IeIcon /></button>
      <button aria-label="Supermium" className={quick}><svg viewBox="0 0 48 48" className="size-6"><SupermiumArt /></svg></button>
      <button aria-label="Libraries" className={quick}><Libraries className="size-6" /></button>
      <button aria-label="Media Player" className={quick}><WmpIcon /></button>
      <div className="ml-[5px] flex border-b-2 border-white pt-[2px]">
        <button className="flex w-28 items-center gap-[6px] border border-b-0 border-[#c9e7f5] bg-linear-to-b from-[#a6cfe8] to-[#86bce0] pt-1 pl-[6px] text-[#eef8ff]">
          <Folder className="size-6" />wxsUI
        </button>
        <button aria-label="wxsUI windows" className="ml-px flex w-[13px] items-center justify-center bg-[#9ccae7] pt-1 text-black"><Down /></button>
      </div>
      <button className="ml-2 flex w-[115px] items-center border-b-2 border-white pt-1 pl-[2px]">
        <NotepadIcon />
        <span className="ml-[5px] pt-[3px]">Untitled - ...</span>
        <Right className="mr-[-2px] ml-auto text-black" />
      </button>
      <button className="ml-[13px] flex w-[115px] items-center border-b-2 border-white pt-1 pl-[2px]">
        <MessengerIcon />
        <span className="ml-[5px] pt-[3px]">POOP@ (A...</span>
        <Right className="mr-[-2px] ml-auto text-black" />
      </button>
      <div className="ml-auto flex items-center">
        <button aria-label="Show hidden icons" className="mr-[12px]"><svg viewBox="0 0 10 12" className="h-3 w-[10px]"><path d="M5 1 L1 6 L5 11 M9.500 1 L5.500 6 L9.500 11" fill="none" stroke="#fff" strokeWidth="1.200" /></svg></button>
        <button aria-label="Everything" className="mr-[9px]"><svg viewBox="0 0 16 16" className="size-4"><circle cx="10" cy="6" r="4.500" fill="none" stroke="#f27b16" strokeWidth="2.800" /><path d="M6.500 9.500 L1.500 14.500" stroke="#f27b16" strokeWidth="3.500" /></svg></button>
        <button aria-label="Volume" className="mr-[9px]"><svg viewBox="0 0 16 16" className="size-4"><path d="M1 5.500 H4 L8 1.500 V14 L4 10.500 H1 Z" fill="#fff" /><circle cx="11" cy="11" r="4.700" fill="#d93645" /><path d="M9 9 L13 13 M13 9 L9 13" stroke="#fff" strokeWidth="1.500" /></svg></button>
        <button aria-label="Network" className="mr-[9px]"><svg viewBox="0 0 16 16" className="size-4"><path d="M6.500 3.500 H15 V12 H5 V8 M8 14.500 H13 M10.500 12 V14 M1.500 1 V4 C1.500 6 5 6 5 4 V1 M3.250 0 V3 M3.250 6 V11" fill="none" stroke="#fff" strokeWidth="1.300" /></svg></button>
        <button aria-label="Action Center" className="mr-[18px]"><svg viewBox="0 0 16 16" className="size-4"><path d="M2 1 V15" stroke="#fff" strokeWidth="1.400" /><path d="M4 2 H9 V4 H15 L13 6.500 L15 9 H8 V7 H4 Z" fill="#fff" /></svg></button>
        <button className="w-[54px] text-center leading-[15px]">12:14 AM<br />8/21/2024</button>
        <button aria-label="Peek at desktop" className="ml-[13px] h-10 w-[5px] border-l border-[#85898b]" />
      </div>
    </footer>
  );
}

export default function App() {
  return (
    <main className="flex h-screen min-h-[768px] cursor-default flex-col overflow-hidden bg-black font-['Noto_Sans','Open_Sans',sans-serif] text-[11px] leading-4 whitespace-nowrap">
      <div className="relative min-h-0 flex-1">
        <div className="grid auto-cols-[78px] grid-flow-col grid-rows-[repeat(6,109px)]">
          {desktopItems.map(({ label, Icon, labelClass = '' }, i) => (
            <button key={i} tabIndex={label ? 0 : -1} className="flex flex-col items-center gap-[2px] pt-2 text-white">
              <Icon />
              <span className={labelClass}>{label}</span>
            </button>
          ))}
        </div>
        <ExplorerWindow />
        <svg viewBox="0 0 12 20" className="absolute top-[574px] left-[29px] h-5 w-3"><path d="M.5 .5 V16 L4 12.500 L6.500 19 L9 18 L6.500 12 H11.500 Z" fill="#fff" stroke="#000" /></svg>
      </div>
      <Taskbar />
    </main>
  );
}
